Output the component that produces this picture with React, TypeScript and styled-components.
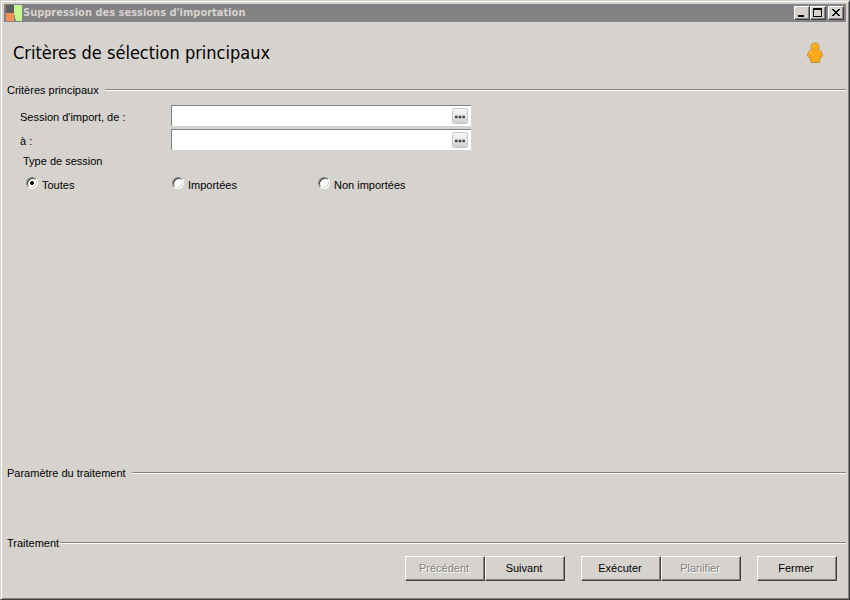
import React, { useState } from "react";
import styled, { createGlobalStyle, css } from "styled-components";

const GlobalStyle = createGlobalStyle`
  *, *::after { box-sizing: border-box; }
  html, body { margin: 0; background: #d6d3ce; }
  body, button, input {
    font-family: "Liberation Sans", Arial, sans-serif;
    font-size: 11px;
    line-height: 14px;
    color: #000;
  }
`;

const raised = css`
  border: 1px solid;
  border-color: #fff #404040 #404040 #fff;
  box-shadow: inset -1px -1px 0 #848284;
  background: #d6d3ce;
`;

const Window = styled.main`
  display: flex;
  flex-direction: column;
  min-height: 100vh;
  padding: 3px 3px 2px 2px;
  background: #d6d3ce;
  border: 1px solid;
  border-color: #d6d3ce #404040 #404040 #d6d3ce;
  box-shadow: inset 1px 1px 0 #fff, inset -1px -1px 0 #848284;
`;

const TitleBar = styled.header`
  display: flex;
  align-items: center;
  height: 18px;
  margin-left: 1px;
  padding: 0 2px 0 1px;
  background: #848284;
`;

const WindowTitle = styled.span`
  flex: 1;
  padding-left: 1px;
  color: #d6d3ce;
  font-family: "DejaVu Sans Condensed", sans-serif;
  font-weight: bold;
`;

const WindowControls = styled.div`
  display: flex;
`;

const ControlButton = styled.button<{ $spaced?: boolean }>`
  ${raised}
  display: flex;
  width: 16px;
  height: 14px;
  padding: 0;
  margin-left: ${(p) => (p.$spaced ? "2px" : "0")};
`;

const Heading = styled.div`
  display: flex;
  align-items: center;
  justify-content: space-between;
  height: 61px;
  padding: 1px 22px 0 10px;
`;

const PageTitle = styled.h1`
  margin: 0;
  font-family: "DejaVu Sans Condensed", sans-serif;
  font-size: 18px;
  line-height: 24px;
  font-weight: normal;
`;

const Section = styled.section<{ $height?: string; $grow?: boolean }>`
  flex: ${(p) => (p.$grow ? "1 0 auto" : "0 0 auto")};
  min-height: ${(p) => p.$height ?? "auto"};
`;

const SectionHeader = styled.div<{ $gap: string }>`
  display: flex;
  align-items: center;
  gap: ${(p) => p.$gap};
  height: 14px;
  padding-left: 4px;
  &::after {
    content: "";
    flex: 1;
    height: 2px;
    border-top: 1px solid #848284;
    border-bottom: 1px solid #fff;
  }
`;

const SectionTitle = styled.h2`
  margin: 0;
  font-size: 11px;
  line-height: 14px;
  font-weight: normal;
`;

const Criteria = styled.div`
  padding: 8px 0 0 17px;
`;

const FieldRow = styled.div`
  display: grid;
  grid-template-columns: 151px minmax(0, 300px);
  align-items: end;
  margin-bottom: 3px;
`;

const FieldLabel = styled.label`
  padding-bottom: 2px;
`;

const Lookup = styled.div`
  display: flex;
  align-items: center;
  height: 21px;
  padding-right: 3px;
  background: #fff;
  border-top: 1px solid #848284;
  border-left: 1px solid #848284;
`;

const LookupInput = styled.input`
  flex: 1;
  min-width: 0;
  height: 18px;
  padding: 0 3px;
  border: 0;
  outline: 0;
  background: transparent;
`;

const LookupButton = styled.button`
  display: flex;
  align-items: center;
  justify-content: center;
  width: 16px;
  height: 16px;
  padding: 0;
  border: 1px solid #c6c6c6;
  border-radius: 2px;
  background: linear-gradient(#f8f8f8, #d2d2d4);
`;

const TypeGroup = styled.fieldset`
  margin: 0;
  padding: 0;
  border: 0;
`;

const Legend = styled.legend`
  padding: 1px 0 0 3px;
`;

const RadioRow = styled.div`
  display: grid;
  grid-template-columns: repeat(3, 146px);
  padding: 9px 0 0 6px;
`;

const RadioLabel = styled.label`
  display: flex;
  align-items: flex-end;
  gap: 4px;
`;

const Radio = styled.input`
  appearance: none;
  width: 12px;
  height: 12px;
  margin: 0 0 3px;
  border: 1px solid;
  border-color: #848284 #fff #fff #848284;
  border-radius: 50%;
  background: #fff;
  box-shadow: inset 1px 1px 0 #404040, inset -1px -1px 0 #d6d3ce;
  &:checked {
    background: radial-gradient(circle, #000 0 2px, #fff 2px);
  }
`;

const Actions = styled.div`
  display: flex;
  justify-content: flex-end;
  gap: 16px;
  padding: 6px 9px 0 0;
`;

const ButtonGroup = styled.div`
  display: flex;
`;

const ActionButton = styled.button`
  ${raised}
  width: 80px;
  height: 25px;
  padding: 0 2px 2px 0;
  &:disabled {
    color: #848284;
    text-shadow: 1px 1px 0 #fff;
  }
`;

function AppLogo() {
  return (
    <svg width="17" height="18" viewBox="0 0 17 18" shapeRendering="crispEdges" aria-hidden="true">
      <rect x="1" y="1" width="8" height="8" fill="#5e5c5e" />
      <rect x="1" y="9" width="8" height="8" fill="#ff8e52" />
      <path d="M9 1H17V17H11L9 9Z" fill="#c6f78c" />
      <path d="M9 9L11 17H9Z" fill="#738e8c" />
    </svg>
  );
}

function PersonIcon() {
  return (
    <svg width="18" height="22" viewBox="0 0 18 22" aria-hidden="true">
      <path
        d="M9 1C6.600 1 5 2.600 5 4.800C5 6 5.300 6.700 6 7.500C3.500 8 1.800 10.500 1.500 13.500C2 15.300 3 16 4.500 16L5 20.500H13.500L14 16C15.300 16 16.200 15 16.500 13.500C16.200 10.500 14.500 8 12 7.500C12.700 6.700 13 6 13 4.800C13 2.600 11.400 1 9 1Z"
        fill="#ffaa18"
        stroke="#c68e39"
        strokeWidth="1"
      />
      <path d="M4.500 15.500V12M13.500 15.500V12M6.500 7.500H11.500" fill="none" stroke="#e39a1c" />
      <path d="M6.500 4.500Q7 2.500 9 2.500M3.500 12Q4 9.500 6 9" fill="none" stroke="#ffc75a" />
    </svg>
  );
}

function Glyph({ kind }: { kind: "minimize" | "maximize" | "close" }) {
  return (
    <svg width="14" height="12" viewBox="0 0 14 12" shapeRendering="crispEdges" aria-hidden="true">
      {kind === "minimize" && <rect x="3" y="8" width="6" height="2" fill="#000" />}
      {kind === "maximize" && <path d="M2 1H11V10H2ZM3 3V9H10V3Z" fillRule="evenodd" />}
      {kind === "close" && (
        <path d="M3 2H5V3H6V4H8V3H9V2H11V3H10V4H9V5H8V6H9V7H10V8H11V9H9V8H8V7H6V8H5V9H3V8H4V7H5V6H6V5H5V4H4V3H3Z" />
      )}
    </svg>
  );
}

function LookupField({ id, label }: { id: string; label: string }) {
  return (
    <FieldRow>
      <FieldLabel htmlFor={id}>{label}</FieldLabel>
      <Lookup>
        <LookupInput id={id} type="text" />
        <LookupButton type="button" aria-label="Rechercher">
          <svg width="10" height="8" viewBox="0 0 10 8" aria-hidden="true">
            <path d="M0 3.700H2.500V6.200H0ZM3.700 3.700H6.200V6.200H3.700ZM7.400 3.700H9.900V6.200H7.400Z" fill="#424042" />
          </svg>
        </LookupButton>
      </Lookup>
    </FieldRow>
  );
}

const sessionTypes = ["Toutes", "Importées", "Non importées"];

export default function App() {
  const [type, setType] = useState(sessionTypes[0]);
  return (
    <>
      <GlobalStyle />
      <Window>
        <TitleBar>
          <AppLogo />
          <WindowTitle>Suppression des sessions d'importation</WindowTitle>
          <WindowControls>
            <ControlButton aria-label="Réduire"><Glyph kind="minimize" /></ControlButton>
            <ControlButton aria-label="Agrandir"><Glyph kind="maximize" /></ControlButton>
            <ControlButton aria-label="Fermer la fenêtre" $spaced><Glyph kind="close" /></ControlButton>
          </WindowControls>
        </TitleBar>
        <Heading>
          <PageTitle>Critères de sélection principaux</PageTitle>
          <PersonIcon />
        </Heading>
        <Section $grow>
          <SectionHeader $gap="6px"><SectionTitle>Critères principaux</SectionTitle></SectionHeader>
          <Criteria>
            <LookupField id="session-from" label="Session d'import, de :" />
            <LookupField id="session-to" label="à :" />
            <TypeGroup>
              <Legend>Type de session</Legend>
              <RadioRow>
                {sessionTypes.map((name) => (
                  <RadioLabel key={name}>
                    <Radio type="radio" name="session-type" checked={type === name} onChange={() => setType(name)} />
                    {name}
                  </RadioLabel>
                ))}
              </RadioRow>
            </TypeGroup>
          </Criteria>
        </Section>
        <Section $height="70px">
          <SectionHeader $gap="6px"><SectionTitle>Paramètre du traitement</SectionTitle></SectionHeader>
        </Section>
        <Section $height="61px">
          <SectionHeader $gap="1px"><SectionTitle>Traitement</SectionTitle></SectionHeader>
          <Actions>
            <ButtonGroup>
              <ActionButton type="button" disabled>Précédent</ActionButton>
              <ActionButton type="button">Suivant</ActionButton>
            </ButtonGroup>
            <ButtonGroup>
              <ActionButton type="button">Exécuter</ActionButton>
              <ActionButton type="button" disabled>Planifier</ActionButton>
            </ButtonGroup>
            <ActionButton type="button">Fermer</ActionButton>
          </Actions>
        </Section>
      </Window>
    </>
  );
}
